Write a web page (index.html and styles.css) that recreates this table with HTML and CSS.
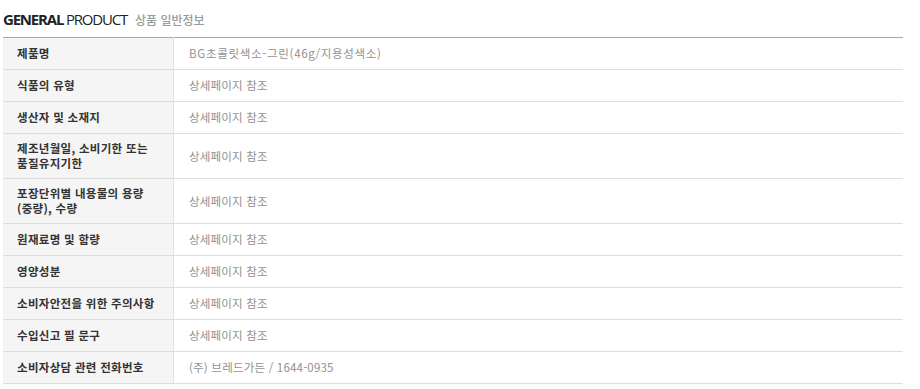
FILE: index.html
```html
<!DOCTYPE html>
<html lang="ko">
<head>
<meta charset="utf-8">
<link rel="stylesheet" href="styles.css">
</head>
<body>
<div class="wrap">
  <h2 class="title"><span class="en"><b>GENERAL</b> PRODUCT</span><span class="ko">상품 일반정보</span></h2>
  <table class="info">
    <tr><th>제품명</th><td class="wide">BG초콜릿색소-그린(46g/지용성색소)</td></tr>
    <tr><th>식품의 유형</th><td>상세페이지 참조</td></tr>
    <tr><th>생산자 및 소재지</th><td>상세페이지 참조</td></tr>
    <tr class="tall"><th>제조년월일, 소비기한 또는<br>품질유지기한</th><td>상세페이지 참조</td></tr>
    <tr class="tall"><th>포장단위별 내용물의 용량<br>(중량), 수량</th><td>상세페이지 참조</td></tr>
    <tr><th>원재료명 및 함량</th><td>상세페이지 참조</td></tr>
    <tr><th>영양성분</th><td>상세페이지 참조</td></tr>
    <tr><th>소비자안전을 위한 주의사항</th><td>상세페이지 참조</td></tr>
    <tr><th>수입신고 필 문구</th><td>상세페이지 참조</td></tr>
    <tr><th>소비자상담 관련 전화번호</th><td>(주) 브레드가든 / 1644-0935</td></tr>
  </table>
</div>
</body>
</html>
```
FILE: styles.css
```css
html, body { margin: 0; padding: 0; background: #fff; }
body { font-family: "Noto Sans CJK KR", "Noto Sans", sans-serif; }
.wrap { padding: 0 17px 0 3px; }
.title {
  margin: 0; height: 37px; display: flex; align-items: center; gap: 8px;
  padding-top: 1px; box-sizing: border-box;
}
.title .en {
  font-family: "Open Sans", "Noto Sans", sans-serif; font-size: 15px;
  font-weight: 400; color: #222; letter-spacing: -1.2px;
}
.title .en b { font-weight: 700; }
.title .ko { font-size: 12px; font-weight: 500; color: #9a9a9a; letter-spacing: 0; }
.info {
  width: 900px; border-collapse: collapse; border-top: 1px solid #a8a8a8;
  font-size: 11.5px; table-layout: fixed;
}
.info th, .info td { border-bottom: 1px solid #ddd; height: 31px; padding: 0; vertical-align: middle; line-height: 15px; }
.info tr.tall th, .info tr.tall td { height: 44px; }
.info th {
  width: 156px; background: #f5f5f5; text-align: left; font-weight: 700; color: #333;
  padding-left: 14px; border-right: 1px solid #e2e2e2; letter-spacing: 0.3px;
}
.info td { color: #919191; padding-left: 15px; letter-spacing: 0.2px; }
.info td.wide { letter-spacing: 0.7px; }
```
